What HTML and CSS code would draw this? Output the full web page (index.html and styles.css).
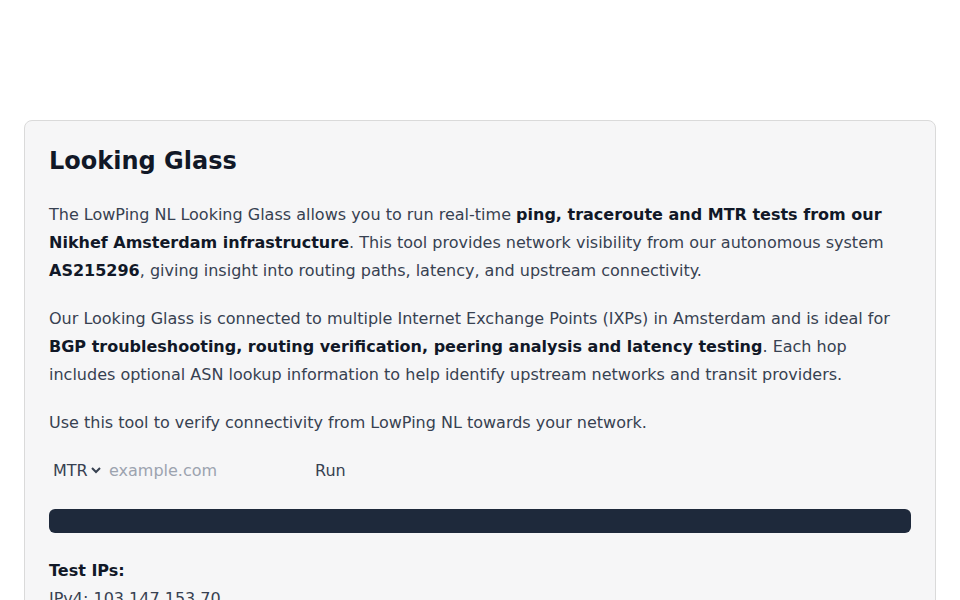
FILE: index.html
```html
<!DOCTYPE html>
<html lang="en">
<head>
<meta charset="utf-8">
<title>Looking Glass</title>
<link rel="stylesheet" href="styles.css">
</head>
<body>
<main class="page">
  <section class="card">
    <h1 class="title">Looking Glass</h1>
    <p class="text">The LowPing NL Looking Glass allows you to run real-time <strong>ping, traceroute and MTR tests from our Nikhef Amsterdam infrastructure</strong>. This tool provides network visibility from our autonomous system <strong>AS215296</strong>, giving insight into routing paths, latency, and upstream connectivity.</p>
    <p class="text">Our Looking Glass is connected to multiple Internet Exchange Points (IXPs) in Amsterdam and is ideal for <strong>BGP troubleshooting, routing verification, peering analysis and latency testing</strong>. Each hop includes optional ASN lookup information to help identify upstream networks and transit providers.</p>
    <p class="text">Use this tool to verify connectivity from LowPing NL towards your network.</p>
    <form class="lg-form" onsubmit="return false">
      <select class="lg-select">
        <option>MTR</option>
        <option>Ping</option>
        <option>Traceroute</option>
      </select>
      <input class="lg-input" type="text" placeholder="example.com">
      <button class="lg-run" type="submit">Run</button>
    </form>
    <pre class="output"></pre>
    <div class="test-ips">
      <div class="test-title">Test IPs:</div>
      <div class="test-line">IPv4: 103.147.153.70</div>
    </div>
  </section>
</main>
</body>
</html>
```

FILE: styles.css
```css
html, body {
  margin: 0;
  padding: 0;
  background: #ffffff;
}
body {
  font-family: "DejaVu Sans", "Liberation Sans", sans-serif;
  color: #374151;
}
.page {
  padding: 120px 24px 40px;
}
.card {
  background: #f6f6f7;
  border: 1px solid #dadada;
  border-radius: 8px;
  padding: 24px 24px 24px;
}
.title {
  margin: 0 0 24px;
  font-size: 24px;
  line-height: 32px;
  font-weight: 700;
  color: #111827;
}
.text {
  margin: 0 0 20px;
  font-size: 16px;
  line-height: 28px;
}
.text strong {
  color: #111827;
  font-weight: 700;
}
.lg-form {
  display: flex;
  align-items: center;
  gap: 3px;
  height: 26px;
}
.lg-select {
  font-family: "DejaVu Sans", sans-serif;
  font-size: 16px;
  color: #374151;
  background: transparent;
  border: none;
  padding: 0;
  margin: 0;
  width: 55px;
}
.lg-input {
  font-family: "DejaVu Sans", sans-serif;
  font-size: 16px;
  color: #374151;
  background: transparent;
  border: none;
  padding: 2px;
  width: 195px;
}
.lg-input::placeholder {
  color: #9ca3af;
}
.lg-run {
  font-family: "DejaVu Sans", sans-serif;
  font-size: 16px;
  color: #374151;
  background: transparent;
  border: none;
  padding: 1px 6px;
  cursor: pointer;
}
.output {
  margin: 26px 0 0;
  height: 24px;
  background: #1e293b;
  border-radius: 6px;
}
.test-ips {
  margin-top: 24px;
  font-size: 16px;
  line-height: 28px;
}
.test-title {
  font-weight: 700;
  color: #111827;
}
.test-line {
  color: #374151;
}
```
